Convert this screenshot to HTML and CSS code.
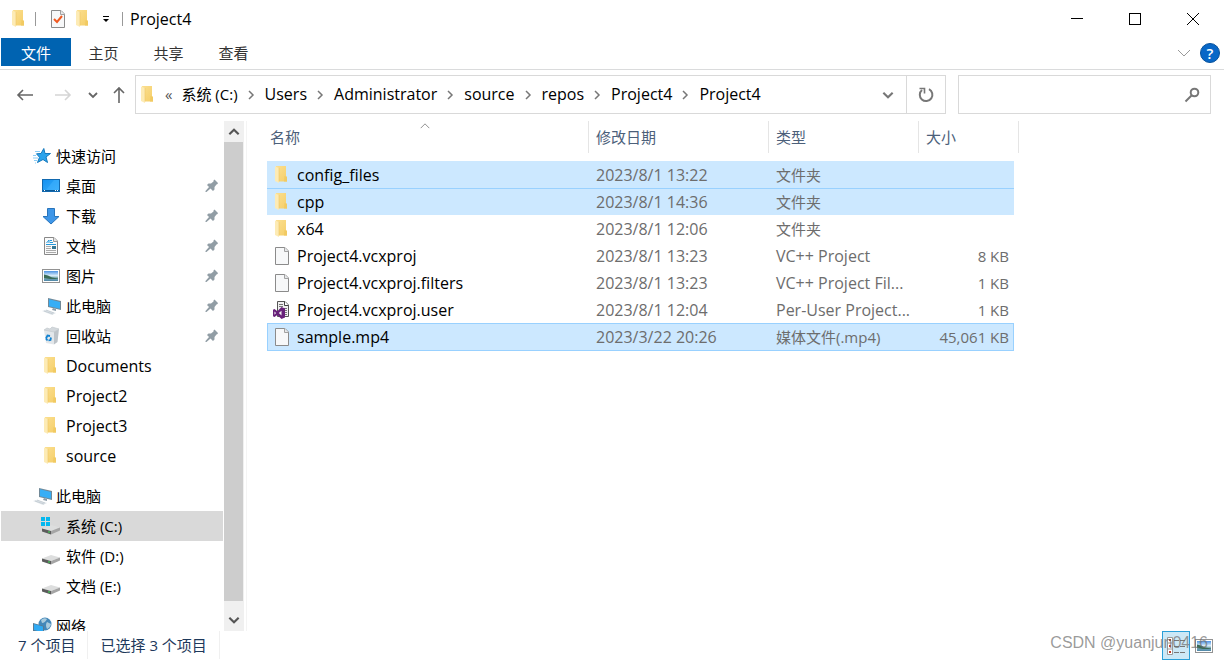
FILE: index.html
```html
<!DOCTYPE html>
<html lang="zh-CN">
<head>
<meta charset="utf-8">
<title>Project4</title>
<link rel="stylesheet" href="styles.css">
</head>
<body>
<svg class="defs" aria-hidden="true">
  <defs>
    <linearGradient id="gold" x1="0" x2="1" y1="0" y2="1"><stop offset="0" stop-color="#fbdf90"/><stop offset="1" stop-color="#f5ce68"/></linearGradient>
    <linearGradient id="sky" x1="0" x2="1" y1="0" y2="1"><stop offset="0" stop-color="#1390f0"/><stop offset="1" stop-color="#3cb0fb"/></linearGradient>
    <linearGradient id="photo" x1="0" x2="0" y1="0" y2="1"><stop offset="0" stop-color="#4b92e3"/><stop offset=".5" stop-color="#e5f4fb"/><stop offset=".6" stop-color="#8bb5bd"/><stop offset="1" stop-color="#4d86a8"/></linearGradient>
    <symbol id="folder" viewBox="0 0 18 18"><path d="M3 0H13V10L14 11V15.500H5Z" fill="url(#gold)"/><path d="M11.500 10L14 11V15.500H11Z" fill="#f1ca62"/><path d="M2 .5L6 2V17L2 15Z" fill="#fdebb5"/><path d="M6 2V15.500" fill="none" stroke="#efc767" stroke-width=".6"/></symbol>
    <symbol id="page" viewBox="0 0 18 18"><path d="M2.500 .5H12L15.500 4V17.500H2.500Z" fill="#f7f8f9" stroke="#8b8b8b"/><path d="M11.500 .5V4.500H15.500" fill="#e6e8e9" stroke="#a2a2a2"/></symbol>
    <symbol id="vs" viewBox="0 0 18 18"><path d="M4.500 .5H12L15.500 4V15.500H4.500Z" fill="#f0f0f0" stroke="#555"/><path d="M11.500 .5V4.500H15.500" fill="#fff" stroke="#444"/><path d="M6 3.500H10M6 5.500H10M8 7.500H14M11 9.500H14M11 11.500H14M11 13.500H14" stroke="#777"/><path d="M8.500 6L12 7.500V16.500L8.500 18L4.300 13.900L1.500 16L0 15.200V8.800L1.500 8L4.300 10.300ZM1.500 10.400V13.700L3 12.100ZM8.500 9.800L5.800 12.100L8.500 14.400Z" fill="#68217a"/></symbol>
    <symbol id="star" viewBox="0 0 18 18"><path d="M10.800 1.500L12 6.500H17.500L13 10L14.500 15.500L10 12.500L4.500 15.500L6.500 10.300L3.500 6.800L8 6.500Z" fill="#2ba3ec" stroke="#1579bd"/><path d="M2 4.500H7M0 8.500H3M0 11H5M1 13.500H4M2 16H3" stroke="#8accf5"/></symbol>
    <symbol id="desktop" viewBox="0 0 18 18"><rect x=".5" y="2.500" width="17" height="12" fill="url(#sky)" stroke="#1269af"/><path d="M12 3H17V13H4Z" fill="#42b4ff" opacity=".5"/><path d="M1 13.500H17" stroke="#095896"/><path d="M2 13.500H4M13 13.500H16" stroke="#fff" stroke-dasharray="1 1"/></symbol>
    <symbol id="download" viewBox="0 0 18 18"><path d="M5.500 1.500H12.500V9.500H17L9 17L1 9.500H5.500Z" fill="#3e96e8" stroke="#2874bb"/></symbol>
    <symbol id="doc" viewBox="0 0 18 18"><path d="M2.500 .5H12L15.500 4V17.500H2.500Z" fill="#fafafa" stroke="#888"/><path d="M11.500 .5V4.500H15.500" fill="#e4e4e4" stroke="#999"/><path d="M4.500 6L7 3V6M8 3.500H10M8 5.500H11M4 7.500H14" fill="none" stroke="#2699dc"/><path d="M4 9.500H9M4 11.500H9M4 13.500H14M4 15.500H14" stroke="#aaa"/><rect x="10" y="9" width="4" height="3" fill="#347795"/></symbol>
    <symbol id="picture" viewBox="0 0 18 18"><rect x=".5" y="2.500" width="17" height="13" fill="#fff" stroke="#929292"/><rect x="2" y="4" width="14" height="10" fill="url(#photo)"/><path d="M2 7.500L6 8.500L10 10.500L16 11.500V12H8L2 11Z" fill="#3a6b57"/></symbol>
    <symbol id="pc" viewBox="0 0 18 18"><path d="M6 1L19 4V13L6 10Z" fill="#718998"/><path d="M7 2.200L18 5V11.700L7 9.200Z" fill="#37aef6"/><path d="M11 11L14 12V14L10 13Z" fill="#8a9ba7"/><path d="M0 14L4 12.700L14 16L10 18Z" fill="#dfe5e9"/><path d="M2 14L11 17M4 13L12 16" stroke="#b5c0c8" stroke-width=".6"/></symbol>
    <symbol id="bin" viewBox="0 0 18 18"><path d="M2 3L12 4V17.500L4 16Z" fill="#e3e7ea"/><path d="M12 4L17 2L15.500 15L12 17.500Z" fill="#bdc3c8"/><path d="M2 3L5 1L8 2L10 0L17 2L12 5Z" fill="#d3d8dc" stroke="#c3cacf" stroke-width=".7"/><path d="M4 11.500L5.500 8.500L8 9M9 10.500L8.500 13L6.500 13.500M5.500 13.500L4 11.500" fill="none" stroke="#1483d1" stroke-width="1.800"/></symbol>
    <symbol id="drive" viewBox="0 0 18 18"><path d="M0 11.500L9 8L18 10.500L9 14Z" fill="#dddede"/><path d="M0 11.500L9 14V17.500L0 14.500Z" fill="#5c5c5c"/><path d="M9 14L18 10.500V13.500L9 17.500Z" fill="#a5a5a5"/><rect x="6" y="14.500" width="2" height="1" fill="#38df50"/></symbol>
    <symbol id="sysdrive" viewBox="0 0 18 18"><use href="#drive"/><path d="M-1 0H3V4H-1ZM4 0H8V4H4ZM-1 5H3V9H-1ZM4 5H8V9H4Z" fill="#05b8ef"/></symbol>
    <symbol id="network" viewBox="0 0 18 18"><circle cx="12" cy="7" r="6.500" fill="#4488b9"/><path d="M8 3Q11 0 14 2Q12 6 9 6ZM14 5L18 7Q17 11 14 12Q12 8 14 5Z" fill="#aacbdd"/><path d="M0 6L11 9V17L0 14Z" fill="#597a91"/><path d="M1 7L10 9.500V15.500L1 13Z" fill="#2faaf4"/></symbol>
    <symbol id="pin" viewBox="0 0 14 14"><path d="M8.500 1.500L9.500 .5L13 4L12.500 5L11.500 5.500L9.500 8V10.500L8 12L5.500 9.500L1.500 13L.5 13L.5 12L4 8L2 6L3.500 4.500H6L8.500 2.500Z" fill="#919da5"/></symbol>
    <symbol id="chev" viewBox="0 0 12 12"><path d="M2 4L6 8L10 4" fill="none" stroke="currentColor" stroke-width="1.800"/></symbol>
    <symbol id="thin" viewBox="0 0 14 14"><path d="M1 4L7 10L13 4" fill="none" stroke="currentColor"/></symbol>
    <symbol id="sep" viewBox="0 0 9 12"><path d="M2 2L6 6L2 10" fill="none" stroke="#777" stroke-width="1.500"/></symbol>
    <symbol id="arrow" viewBox="0 0 18 18"><path d="M17 9H2M7 4L2 9L7 14" fill="none" stroke="currentColor" stroke-width="1.600"/></symbol>
  </defs>
</svg>
<div class="window">
  <header class="titlebar">
    <svg class="icon"><use href="#folder"/></svg>
    <span class="bar"></span>
    <button class="plain" aria-label="属性"><svg class="icon" viewBox="0 0 18 18"><use href="#page"/><path d="M5 9L8 12L13 6" fill="none" stroke="#f05a22" stroke-width="2"/></svg></button>
    <button class="plain" aria-label="新建文件夹"><svg class="icon"><use href="#folder"/></svg></button>
    <button class="plain customize" aria-label="自定义快速访问工具栏"><svg width="8" height="8" viewBox="0 0 8 8"><path d="M1 1.500H7" stroke="#000"/><path d="M1 4H7L4 7Z"/></svg></button>
    <span class="bar"></span>
    <h1>Project4</h1>
    <div class="caption">
      <button class="plain" aria-label="最小化"><svg width="14" height="14" viewBox="0 0 14 14"><path d="M1 6.500H13" stroke="#000"/></svg></button>
      <button class="plain" aria-label="最大化"><svg width="14" height="14" viewBox="0 0 14 14"><rect x="1.500" y="1.500" width="11" height="11" fill="none" stroke="#000"/></svg></button>
      <button class="plain" aria-label="关闭"><svg width="14" height="14" viewBox="0 0 14 14"><path d="M1 1L13 13M13 1L1 13" stroke="#000"/></svg></button>
    </div>
  </header>
  <nav class="ribbon">
    <button class="plain tab file">文件</button>
    <button class="plain tab">主页</button>
    <button class="plain tab">共享</button>
    <button class="plain tab">查看</button>
    <div class="ribbon-end">
      <button class="plain expand" aria-label="展开功能区"><svg width="14" height="14"><use href="#thin"/></svg></button>
      <button class="plain help" aria-label="帮助">?</button>
    </div>
  </nav>
  <div class="navbar">
    <div class="history">
      <button class="plain" aria-label="后退"><svg class="icon"><use href="#arrow"/></svg></button>
      <button class="plain off" aria-label="前进"><svg class="icon flip"><use href="#arrow"/></svg></button>
      <button class="plain recent" aria-label="最近浏览的位置"><svg width="12" height="12"><use href="#chev"/></svg></button>
      <button class="plain" aria-label="上移"><svg class="icon up"><use href="#arrow"/></svg></button>
    </div>
    <div class="address">
      <svg class="icon"><use href="#folder"/></svg>
      <span class="laquo">«</span>
      <a href="#">系统 (C:)</a><svg class="sep"><use href="#sep"/></svg>
      <a class="latin" href="#">Users</a><svg class="sep"><use href="#sep"/></svg>
      <a class="latin" href="#">Administrator</a><svg class="sep"><use href="#sep"/></svg>
      <a class="latin" href="#">source</a><svg class="sep"><use href="#sep"/></svg>
      <a class="latin" href="#">repos</a><svg class="sep"><use href="#sep"/></svg>
      <a class="latin" href="#">Project4</a><svg class="sep"><use href="#sep"/></svg>
      <a class="latin" href="#">Project4</a>
      <button class="plain drop" aria-label="以前的位置"><svg width="14" height="14"><use href="#chev"/></svg></button>
      <button class="plain refresh" aria-label="刷新"><svg width="18" height="18" viewBox="0 0 18 18"><path d="M12 3.200A6.300 6.300 0 1 1 5 4" fill="none" stroke="#777" stroke-width="2"/><path d="M2.500 2.500H7.500V7.500" fill="none" stroke="#777" stroke-width="1.600"/></svg></button>
    </div>
    <div class="search">
      <input type="text" aria-label="搜索">
      <svg width="16" height="16" viewBox="0 0 16 16"><circle cx="10.500" cy="5.500" r="3.800" fill="none" stroke="#777" stroke-width="2"/><path d="M7.500 8.500L1.500 14.500" stroke="#777" stroke-width="2"/></svg>
    </div>
  </div>
  <main class="content">
    <aside class="side">
      <ul class="tree">
        <li class="root"><svg class="icon"><use href="#star"/></svg>快速访问</li>
        <li><svg class="icon"><use href="#desktop"/></svg>桌面<svg class="pin"><use href="#pin"/></svg></li>
        <li><svg class="icon"><use href="#download"/></svg>下载<svg class="pin"><use href="#pin"/></svg></li>
        <li><svg class="icon"><use href="#doc"/></svg>文档<svg class="pin"><use href="#pin"/></svg></li>
        <li><svg class="icon"><use href="#picture"/></svg>图片<svg class="pin"><use href="#pin"/></svg></li>
        <li><svg class="icon"><use href="#pc"/></svg>此电脑<svg class="pin"><use href="#pin"/></svg></li>
        <li><svg class="icon"><use href="#bin"/></svg>回收站<svg class="pin"><use href="#pin"/></svg></li>
        <li class="latin"><svg class="icon"><use href="#folder"/></svg>Documents</li>
        <li class="latin"><svg class="icon"><use href="#folder"/></svg>Project2</li>
        <li class="latin"><svg class="icon"><use href="#folder"/></svg>Project3</li>
        <li class="latin"><svg class="icon"><use href="#folder"/></svg>source</li>
        <li class="root gap"><svg class="icon"><use href="#pc"/></svg>此电脑</li>
        <li class="current"><svg class="icon"><use href="#sysdrive"/></svg>系统 (C:)</li>
        <li><svg class="icon"><use href="#drive"/></svg>软件 (D:)</li>
        <li><svg class="icon"><use href="#drive"/></svg>文档 (E:)</li>
        <li class="root gap"><svg class="icon"><use href="#network"/></svg>网络</li>
      </ul>
      <div class="scroll">
        <button class="plain" aria-label="向上滚动"><svg class="turn" width="14" height="14"><use href="#chev"/></svg></button>
        <div class="thumb"></div>
        <button class="plain" aria-label="向下滚动"><svg width="14" height="14"><use href="#chev"/></svg></button>
      </div>
    </aside>
    <section class="files">
      <table>
        <colgroup><col class="c-name"><col class="c-date"><col class="c-type"><col class="c-size"><col class="c-end"></colgroup>
        <thead><tr><th>名称<svg class="sort" width="10" height="10"><use href="#thin"/></svg></th><th>修改日期</th><th>类型</th><th colspan="2">大小</th></tr></thead>
        <tbody>
          <tr class="sel"><td><span class="name"><svg class="icon"><use href="#folder"/></svg>config_files</span></td><td class="latin">2023/8/1 13:22</td><td>文件夹</td><td></td></tr>
          <tr class="sel line"><td><span class="name"><svg class="icon"><use href="#folder"/></svg>cpp</span></td><td class="latin">2023/8/1 14:36</td><td>文件夹</td><td></td></tr>
          <tr><td><span class="name"><svg class="icon"><use href="#folder"/></svg>x64</span></td><td class="latin">2023/8/1 12:06</td><td>文件夹</td><td></td></tr>
          <tr><td><span class="name"><svg class="icon"><use href="#page"/></svg>Project4.vcxproj</span></td><td class="latin">2023/8/1 13:23</td><td class="latin">VC++ Project</td><td>8 KB</td></tr>
          <tr><td><span class="name"><svg class="icon"><use href="#page"/></svg>Project4.vcxproj.filters</span></td><td class="latin">2023/8/1 13:23</td><td class="latin">VC++ Project Fil...</td><td>1 KB</td></tr>
          <tr><td><span class="name"><svg class="icon"><use href="#vs"/></svg>Project4.vcxproj.user</span></td><td class="latin">2023/8/1 12:04</td><td class="latin">Per-User Project...</td><td>1 KB</td></tr>
          <tr class="sel focus"><td><span class="name"><svg class="icon"><use href="#page"/></svg>sample.mp4</span></td><td class="latin">2023/3/22 20:26</td><td>媒体文件(.mp4)</td><td>45,061 KB</td></tr>
        </tbody>
      </table>
    </section>
  </main>
  <footer class="status">
    <span>7 个项目</span><span>已选择 3 个项目</span>
    <div class="views">
      <button class="plain view on" aria-label="详细信息"><svg width="18" height="18" viewBox="0 0 18 18"><path d="M.5 .5H5.500V17.500H.5ZM.5 6H5.500M.5 12H5.500" fill="#fff" stroke="#999"/><path d="M2 3H4M2 9H4M2 15H4" stroke="#c43a25" stroke-width="2"/><path d="M7 3.500H18M7 9.500H18M7 15.500H18" stroke="#777" stroke-dasharray="5 1"/></svg></button>
      <button class="plain view" aria-label="大缩略图"><svg class="icon"><use href="#picture"/></svg></button>
      <span class="credit">CSDN @yuanjun0416</span>
    </div>
  </footer>
</div>
</body>
</html>
```
FILE: styles.css
```css
* { box-sizing: border-box; }
body {
  margin: 0;
  background: #fff;
  color: #000;
  font: 15px/20px "Open Sans", "Noto Sans CJK SC", sans-serif;
}
.defs { position: absolute; width: 0; height: 0; }
svg { display: block; flex: none; }
.icon { width: 18px; height: 18px; }
symbol { overflow: visible; }
.tree .icon { overflow: visible; }
.latin, .name { font-size: 16px; }
.plain { border: 0; padding: 0; margin: 0; background: none; font: inherit; color: inherit; display: flex; align-items: center; justify-content: center; }
.window { height: 100vh; display: flex; flex-direction: column; overflow: hidden; }

.titlebar { height: 38px; flex: none; display: flex; align-items: center; padding-left: 10px; }
.titlebar .bar { width: 1px; height: 14px; background: #999; margin: 0 7px; }
.titlebar .bar + .plain { margin-left: 6px; }
.titlebar .plain + .plain { margin-left: 7px; }
.titlebar .plain + .customize { width: 16px; margin-left: 6px; margin-right: 1px; }
.titlebar h1 { margin: 0; font-size: 16px; font-weight: 400; }
.caption { margin-left: auto; display: flex; padding-right: 2px; }
.titlebar .caption .plain { width: 58px; height: 38px; margin: 0; }

.ribbon { height: 32px; flex: none; display: flex; border-bottom: 1px solid #dadbdc; padding: 0 4px 0 1px; color: #333; }
.tab { width: 65px; height: 28px; padding-top: 1px; }
.tab.file { width: 70px; background: #0063b1; color: #fff; }
.ribbon-end { margin-left: auto; height: 30px; display: flex; align-items: center; gap: 9px; }
.expand { color: #999; }
.help { width: 20px; height: 20px; border-radius: 50%; background: #0867c7; border: 1px solid #07519b; color: #fff; font-weight: 600; }

.navbar { flex: none; display: flex; padding: 5px 13px 0 16px; height: 44px; }
.history { width: 119px; display: flex; align-items: center; color: #666; }
.history .off { color: #d5d5d5; margin-left: 20px; }
.history .recent { margin: 0 11px 0 15px; }
.flip { transform: rotate(180deg); }
.up { transform: rotate(90deg); }
.address { flex: 1; min-width: 0; height: 39px; display: flex; align-items: center; border: 1px solid #d9d9d9; padding-left: 3px; white-space: nowrap; }
.address a { color: #000; text-decoration: none; padding-bottom: 2px; }
.laquo { margin: 0 9px 0 8px; color: #555; padding-bottom: 2px; }
.sep { width: 9px; height: 12px; margin: 0 9px; }
.drop { margin-left: auto; width: 36px; height: 37px; color: #777; }
.refresh { width: 39px; height: 37px; border-left: 1px solid #d9d9d9; }
.search { width: 253px; height: 39px; margin-left: 12px; border: 1px solid #d9d9d9; display: flex; align-items: center; padding-right: 10px; }
.search input { flex: 1; min-width: 0; border: 0; outline: 0; height: 30px; font: inherit; background: none; }

.content { flex: 1; min-height: 0; display: flex; padding-top: 7px; }
.side { width: 247px; flex: none; display: flex; border-right: 1px solid #f4f4f4; padding-right: 2px; }
.tree { flex: 1; margin: 0 1px; padding: 20px 0 0; list-style: none; overflow: hidden; }
.tree li { height: 30px; display: flex; align-items: center; gap: 6px; padding: 0 4px 0 41px; }
.tree .root { padding-left: 32px; gap: 5px; }
.tree .gap { margin-top: 10px; }
.tree .current { background: #d9d9d9; }
.pin { width: 14px; height: 14px; margin-left: auto; }
.scroll { width: 20px; display: flex; flex-direction: column; background: #f0f0f0; color: #555; padding-right: 1px; }
.scroll .plain { height: 21px; flex: none; }
.scroll .plain:last-child { height: 30px; padding-top: 8px; }
.thumb { flex: 1; background: #cdcdcd; }
.turn { transform: rotate(180deg); }

.files { flex: 1; padding-left: 20px; }
.files table { table-layout: fixed; border-collapse: separate; border-spacing: 0; width: 752px; }
.c-name { width: 322px; }
.c-date { width: 180px; }
.c-type { width: 150px; }
.c-size { width: 95px; }
.c-end { width: 5px; }
.files th { height: 32px; padding: 0 7px; text-align: left; font-weight: 400; color: #4c607a; border-right: 1px solid #e5e5e5; position: relative; }
.files th:first-child { padding-left: 3px; }
.sort { position: absolute; left: 50%; margin-left: -8px; top: 0; color: #666; transform: rotate(180deg); }
.files tbody::before { content: ""; display: block; height: 8px; }
.files td { height: 27px; padding: 0 7px; color: #6d6d6d; white-space: nowrap; overflow: hidden; border: 0 solid #99d1ff; }
.files td:first-child { color: #000; padding-left: 6px; }
.files td:last-child { text-align: right; padding: 0 5px 0 0; }
.name { display: flex; align-items: center; gap: 6px; }
.sel td { background: #cce8ff; }
.line td { border-top-width: 1px; }
.focus td { border-top-width: 1px; border-bottom-width: 1px; height: 28px; }
.focus td:first-child { border-left-width: 1px; padding-left: 5px; }
.focus td:last-child { border-right-width: 1px; padding-right: 4px; }

.status { height: 30px; flex: none; display: flex; color: #1e395b; padding-left: 18px; }
.status > span { height: 28px; line-height: 28px; padding-right: 12px; margin-right: 12px; border-right: 1px solid #f0f0f0; }
.views { margin-left: auto; display: flex; position: relative; padding-right: 6px; }
.view { width: 28px; height: 29px; }
.view.on { background: #cce8f6; border: 1px solid #2a9fd8; }
.credit { position: absolute; right: 16px; top: 1px; color: rgba(110, 110, 110, .7); font: 16px/22px "Liberation Sans", sans-serif; white-space: nowrap; }
```
